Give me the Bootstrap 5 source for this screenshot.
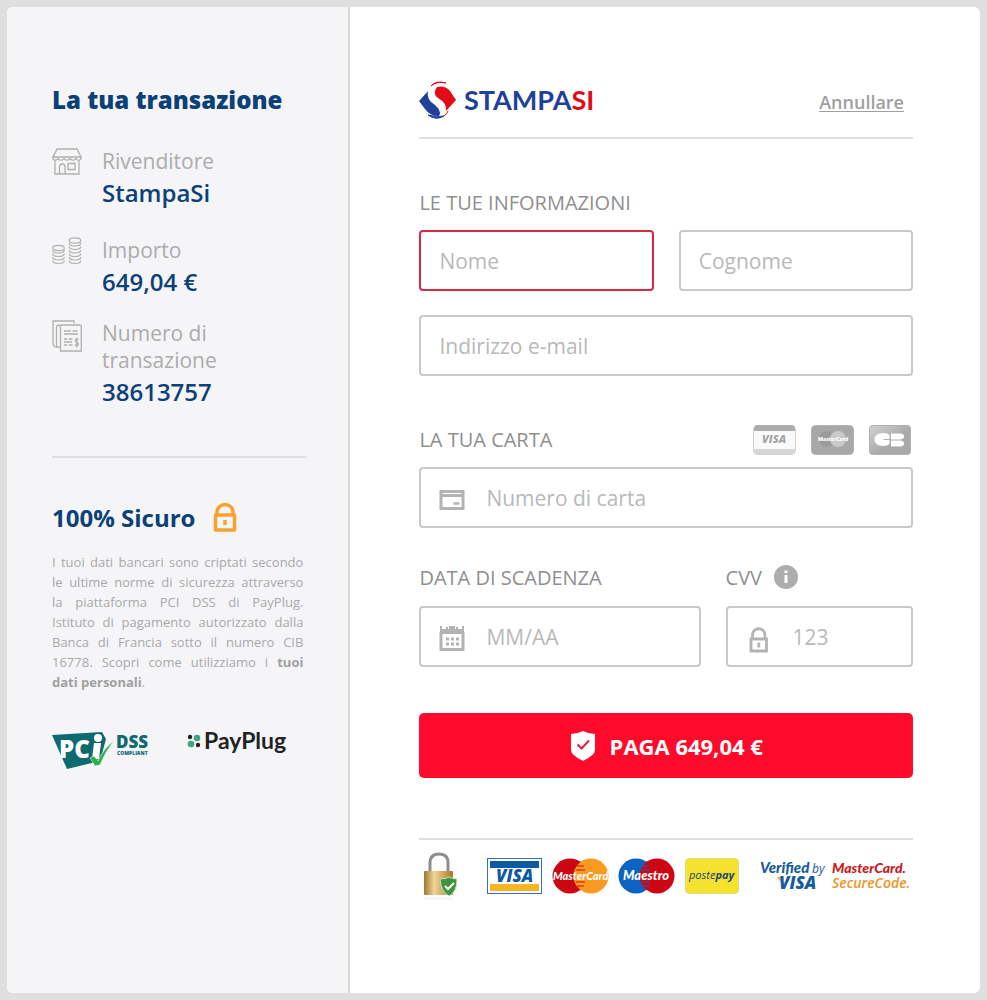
<!DOCTYPE html>
<html lang="it">
<head>
<meta charset="utf-8">
<meta name="viewport" content="width=device-width, initial-scale=1">
<title>Pagamento StampaSi</title>
<link href="https://cdn.jsdelivr.net/npm/bootstrap@5.3.0/dist/css/bootstrap.min.css" rel="stylesheet">
<style>
  body { background: #dfdfdf; font-family: "Open Sans", sans-serif; color: #9b9b9b; padding: 7px; }
  svg { display: block; flex: none; }
  svg text { font-family: "Open Sans", sans-serif; }
  svg text.brand-text { font-family: Lato, sans-serif; font-style: italic; font-weight: 900; }
  svg text.wordmark { font-family: Lato, sans-serif; font-weight: 700; }
  .pay-shell { display: grid; grid-template-columns: 6fr 11fr; min-height: calc(100vh - 14px); background: #fff; border-radius: 6px; overflow: hidden; }
  .summary { background: #f5f5f8; border-right: 2px solid #d8d8d8; padding: 75px 42px 40px 45px; }
  .checkout { padding: 72px 67px 40px 69px; }
  .summary h1 { font-size: 24px; font-weight: 800; line-height: 36px; color: #0c4079; margin-bottom: 30px; }
  .summary h2 { font-size: 24px; font-weight: 700; line-height: 36px; color: #0c4079; margin: 0; }
  .summary dl { margin: 0; }
  .summary dt { font-size: 21px; font-weight: 400; line-height: 27px; color: #acacac; }
  .summary dd { font-size: 24px; font-weight: 600; line-height: 36px; color: #0c4079; margin: 0; }
  .item { gap: 20px; margin-bottom: 20px; }
  .item:first-of-type { margin-bottom: 26px; }
  .item svg { width: 30px; }
  .rule { border: 0; border-top: 2px solid #dfdfe1; opacity: 1; margin: 0; }
  .summary .rule { margin: 46px 0 42px; }
  .privacy { font-size: 13px; line-height: 20px; color: #a9a9a9; text-align: justify; margin: 16px 3px 38px 0; }
  .privacy a { color: #a0a0a0; font-weight: 700; text-decoration: none; }
  .cancel { font-size: 18px; line-height: 24px; font-weight: 600; color: #a0a0a0; margin: 4px 9px 0 0; text-underline-offset: 2px; }
  .caption { font-size: 20px; line-height: 28px; font-weight: 500; color: #8f8f8f; margin: 0; }
  h3.caption { margin: 50px 0 13px; }
  .card-head { margin: 48px 0 11px; }
  .row-head { height: 64px; margin-bottom: 14px; }
  .form-control.field { height: 61px; border: 2px solid #c9c9c9; border-radius: 4px; padding: 0 18px; font-size: 21px; color: #777; }
  .form-control.field::placeholder { color: #b9b9b9; }
  .form-control.field.is-empty { border-color: #d52b42; }
  .with-icon { position: relative; }
  .with-icon svg { position: absolute; left: 20px; top: 18px; }
  .with-icon .form-control.field { padding-left: 65px; }
  .names { display: grid; grid-template-columns: 1fr 1fr; gap: 25px; margin-bottom: 24px; }
  .accepted { gap: 15px; padding-right: 1px; }
  .card-extra { display: grid; grid-template-columns: 3fr 2fr; column-gap: 25px; }
  .pay-btn { height: 65px; gap: 14px; background: #ff0a2b; color: #fff; border-radius: 5px; font-size: 22px; line-height: 32px; font-weight: 700; margin: 46px 0 60px; }
  .pay-btn:hover { background: #e00724; color: #fff; }
  .info-btn { width: 24px; height: 24px; margin: 0 0 3px 12px; }
  .logos { gap: 9px; }
  .logos .first-card { margin-left: 21px; }
  .logos .secure { margin-left: 12px; }
  @media (max-width: 760px) {
    .pay-shell { grid-template-columns: 1fr; }
    .summary { border-right: 0; padding: 32px 24px; }
    .checkout { padding: 32px 24px; }
    .names, .card-extra { grid-template-columns: 1fr; }
  }
</style>
</head>
<body>
<div class="pay-shell">
  <aside class="summary">
    <h1>La tua transazione</h1>
    <div class="item d-flex">
      <svg height="28" viewBox="0 0 30 28" fill="none" stroke="#b0b0b0" stroke-width="1.3" aria-hidden="true">
        <path d="M5 1h20l4 8H1zM1 9v1q0 2.200 2.300 2.200T6 10q.4 2.200 3 2.200T12 10q.4 2.200 3 2.200T18 10q.4 2.200 3 2.200T24 10q.4 2.200 2.700 2.200T29 10V9M3 12.500V26h24V12.500M7.500 26v-7q0-3 2.800-3t2.800 3v7M16 15.500h7v6h-7z"/>
      </svg>
      <dl><dt>Rivenditore</dt><dd>StampaSi</dd></dl>
    </div>
    <div class="item d-flex">
      <svg height="28" viewBox="0 0 30 28" fill="none" stroke="#b0b0b0" stroke-width="1.2" aria-hidden="true">
        <ellipse cx="6.500" cy="11" rx="5.800" ry="2.600"/>
        <path d="M.7 13q0 3 5.800 3t5.800-3M.7 16.500q0 3 5.800 3t5.800-3M.7 20q0 3 5.800 3t5.800-3M.7 23.500q0 3 5.800 3t5.800-3"/>
        <ellipse cx="23" cy="3.500" rx="5.800" ry="2.600"/>
        <path d="M17.200 6q0 3 5.800 3t5.800-3M17.200 9.500q0 3 5.800 3t5.800-3M17.200 13q0 3 5.800 3t5.800-3M17.200 16.500q0 3 5.800 3t5.800-3M17.200 20q0 3 5.800 3t5.800-3M17.200 23.500q0 3 5.800 3t5.800-3"/>
      </svg>
      <dl><dt>Importo</dt><dd>649,04 €</dd></dl>
    </div>
    <div class="item d-flex">
      <svg height="32" viewBox="0 0 30 32" fill="none" stroke="#b0b0b0" stroke-width="1.3" aria-hidden="true">
        <path d="M22 3.500V1H1v22q0 4 3.500 4H8M4.500 27V8q0-3 2-3t2 3v19M8.500 5H28q1.300 0 1.300 1.500V31H8.500V8q0-3-2-3M12 11h7M20.500 11h5M12 14h14M12 19h3M16.500 19h4M12 22h8M12 25h3M16.500 25h4"/>
        <path d="M26.500 19.800q-.8-1-2.200-.7-1.500.6-.9 2 .4.8 1.600 1.200 1.500.7 1.300 2-.5 1.500-2.100 1.200-1-.2-1.500-1M24.800 17.500v10"/>
      </svg>
      <dl><dt>Numero di transazione</dt><dd>38613757</dd></dl>
    </div>
    <hr class="rule">
    <div class="d-flex align-items-center gap-3">
      <h2>100% Sicuro</h2>
      <svg width="28" height="32" viewBox="-1 1 28 32" fill="none" stroke="#f9a030" stroke-width="3.500" aria-hidden="true">
        <path d="M3.500 14h19v15h-19z" stroke-linejoin="round"/><path d="M5 14v-3a8 7.500 0 0 1 16 0v3"/><path d="M13 19v5"/>
      </svg>
    </div>
    <p class="privacy">I tuoi dati bancari sono criptati secondo le ultime norme di sicurezza attraverso la&nbsp;piattaforma PCI DSS di PayPlug. Istituto&nbsp;di&nbsp;pagamento autorizzato dalla Banca&nbsp;di&nbsp;Francia sotto il numero CIB 16778.&nbsp;Scopri come utilizziamo i <a href="#">tuoi dati&nbsp;personali</a>.</p>
    <div class="d-flex align-items-start gap-4 flex-wrap">
      <svg width="101" height="40" viewBox="0 0 101 40" role="img" aria-label="PCI DSS Compliant">
        <path d="M0 5 50 2l4 7-6 22-33 8z" fill="#0f6a70"/>
        <text x="7" y="28" font-size="24" font-weight="800" fill="#fff">PC</text>
        <path d="M42 13h7l-2 16h-7z" fill="#fff"/><circle cx="46" cy="8" r="4" fill="#fff"/>
        <path d="m38 28 4-2 4 5q5-12 16-20-9 11-14 24l-5 1z" fill="#2bb24c" stroke="#f5f5f8" stroke-width=".6"/>
        <text x="64" y="18" font-size="17" font-weight="800" fill="#0f6a70">DSS</text>
        <text x="65" y="25" font-size="5" font-weight="800" fill="#0f6a70">COMPLIANT</text>
      </svg>
      <svg class="ms-2" width="108" height="32" viewBox="-1 0 108 32" role="img" aria-label="PayPlug">
        <circle cx="4" cy="7" r="2.200" fill="#222"/><circle cx="11" cy="8" r="3.300" fill="#3aa77d"/><circle cx="5" cy="14" r="3.300" fill="#3aa77d"/><circle cx="12" cy="15" r="2.200" fill="#222"/>
        <text class="wordmark" x="18" y="19" font-size="23" fill="#222">PayPlug</text>
      </svg>
    </div>
  </aside>

  <main class="checkout">
    <header class="d-flex align-items-center justify-content-between pb-3">
      <svg width="178" height="42" viewBox="0 0 178 42" role="img" aria-label="StampaSi">
        <path d="M0 22 10 11q-1 7 9 13 6 5 1 13-8 1-14-7z" fill="#1f419b"/>
        <path d="M37 21 27 32q1-8-8-13-6-4-1-11 8-2 13 4z" fill="#e30b17"/>
        <path d="M9 11q4-10 17-7-9-1-13 8-1 6 6 10 8 4 7 9-1 4-5 6 1-6-5-11-9-5-7-15z" fill="#fff"/>
        <path d="M12 7q5-6 15-3Q17 2 12 7z" stroke="#e30b17" fill="#e30b17"/>
        <path d="M9 36q8 6 16 1-7 2-16-1z" stroke="#1f419b" fill="#1f419b"/>
        <path d="M29 32q-1 3-4 5" stroke="#e30b17" fill="none"/>
        <text class="wordmark" x="45" y="31" font-size="27" fill="#1f419b">STAMPA<tspan fill="#e30b17">SI</tspan></text>
      </svg>
      <a class="cancel" href="#">Annullare</a>
    </header>
    <hr class="rule">
    <form>
      <h3 class="caption">LE TUE INFORMAZIONI</h3>
      <div class="names">
        <input class="form-control field is-empty" type="text" placeholder="Nome" aria-label="Nome">
        <input class="form-control field" type="text" placeholder="Cognome" aria-label="Cognome">
      </div>
      <input class="form-control field" type="email" placeholder="Indirizzo e-mail" aria-label="Indirizzo e-mail">

      <div class="card-head d-flex justify-content-between align-items-center">
        <label class="caption" for="number">LA TUA CARTA</label>
        <div class="accepted d-flex">
          <svg width="43" height="32" viewBox="0 0 43 32" role="img" aria-label="Visa">
            <rect x=".5" y="1.500" width="42" height="29" rx="4" fill="#fafafa" stroke="#cfcfcf"/><path d="M1 7V5q0-4 4-4h33q4 0 4 4v2z" fill="#acacac"/><path d="M1 25h41v1q0 4-4 4H5q-4 0-4-4z" fill="#d6d6d6"/>
            <text x="9" y="19" font-size="11" font-weight="800" font-style="italic" fill="#a5a5a5">VISA</text>
          </svg>
          <svg width="43" height="32" viewBox="0 0 43 32" role="img" aria-label="MasterCard">
            <rect x=".5" y="1.500" width="42" height="29" rx="4" fill="#a8a8a8" stroke="#b4b4b4"/><circle cx="16" cy="15" r="8" fill="#9b9b9b"/><circle cx="27" cy="15" r="8" fill="#c9c9c9"/>
            <text x="7" y="17" font-size="5" font-weight="800" fill="#fff">MasterCard</text>
          </svg>
          <svg width="43" height="32" viewBox="0 0 43 32" role="img" aria-label="CB">
            <defs><linearGradient id="cbg" x2="1" y2="1"><stop stop-color="#d2d2d2"/><stop offset=".6" stop-color="#a8a8a8"/></linearGradient></defs>
            <rect x=".5" y="1.500" width="41" height="29" rx="3" fill="url(#cbg)" stroke="#b0b0b0"/>
            <path d="M20.500 15V11q-2-2-6-2-9 0-9 6.500T14.500 22q4 0 6-2v-4h-6v-1zM22 9.500h9q4 0 4 3t-4 3h-9zm0 7h9q4 0 4 3t-4 3h-9z" fill="#fff"/>
          </svg>
        </div>
      </div>
      <div class="with-icon">
        <svg width="26" height="28" viewBox="0 0 26 28" fill="none" stroke="#b3b3b3" stroke-width="3" aria-hidden="true"><path d="M2 6.500h22v17H2zM2 10.500h22"/><path d="M14.500 18.500h6" stroke-width="2.500"/></svg>
        <input class="form-control field" id="number" type="text" placeholder="Numero di carta">
      </div>

      <div class="card-extra">
        <div>
          <div class="row-head d-flex align-items-end"><label class="caption" for="expiry">DATA DI SCADENZA</label></div>
          <div class="with-icon">
            <svg width="26" height="28" viewBox="0 0 26 28" fill="none" stroke="#b3b3b3" aria-hidden="true"><path d="M2 8v17.500h22V8" stroke-width="3"/><path d="M1 7.500h24" stroke-width="5"/><path d="M2 2v5M24 2v5M8 3v4M18 3v4" stroke-width="2"/><path d="M10 4h6" stroke-width="4"/><path d="M7 15h3m2 0h3m2 0h3M7 20h3m2 0h3m2 0h3" stroke-width="3"/></svg>
            <input class="form-control field" id="expiry" type="text" placeholder="MM/AA">
          </div>
        </div>
        <div>
          <div class="row-head d-flex align-items-end">
            <label class="caption" for="cvv">CVV</label>
            <button class="info-btn btn p-0 border-0" type="button" aria-label="Informazioni sul CVV"><svg width="24" height="24" viewBox="0 0 24 24" aria-hidden="true"><circle cx="12" cy="12" r="12" fill="#adadad"/><path d="M12 10v8M12 5.500v2.500" fill="none" stroke="#fff" stroke-width="3"/></svg></button>
          </div>
          <div class="with-icon">
            <svg width="26" height="30" viewBox="0 0 26 30" fill="none" stroke="#b3b3b3" stroke-width="2.800" aria-hidden="true"><path d="M5 15h15.500v12H5z"/><path d="M6.500 15v-4a6.200 6.200 0 0 1 12.500 0v4"/><path d="M12.800 18.500v5"/></svg>
            <input class="form-control field" id="cvv" type="text" placeholder="123">
          </div>
        </div>
      </div>
      <button class="pay-btn btn w-100 border-0 d-flex align-items-center justify-content-center" type="submit">
        <svg width="26" height="32" viewBox="0 0 26 32" aria-hidden="true"><path d="M1 4q6 0 12-3 6 3 12 3v16q0 5-12 11Q1 25 1 20z" fill="#fff"/><path d="m7.500 14.500 4 4 7.500-8" fill="none" stroke="#e0223c" stroke-width="2"/></svg>
        <span>PAGA 649,04 €</span>
      </button>
    </form>
    <hr class="rule">
    <footer class="logos d-flex flex-wrap align-items-center pt-2">
      <svg width="38" height="56" viewBox="0 0 38 56" role="img" aria-label="Pagamento sicuro">
        <defs><linearGradient id="brass"><stop stop-color="#9c7730"/><stop offset=".35" stop-color="#efd596"/><stop offset="1" stop-color="#a87824"/></linearGradient></defs>
        <path d="M11 26V15q0-9 9-9t9 9v11" fill="none" stroke="#8d9092" stroke-width="3"/>
        <rect x="5" y="23" width="29" height="24" rx="1" fill="url(#brass)"/><path d="M5 49h29v3H5z" fill="#f5f5f5"/>
        <path d="M21 31q6 0 9-2 4 2 8 2 0 13-8 17-8-4-9-17z" fill="#3f9640" stroke="#c5e0bf"/><path d="m26 38 3 3 6-6" fill="none" stroke="#fff" stroke-width="2"/>
      </svg>
      <svg class="first-card" width="56" height="38" viewBox="0 0 56 38" role="img" aria-label="Visa">
        <rect x=".5" y="1.500" width="54" height="35" fill="#fff" stroke="#3971b0"/><path d="M3 4h49v7H3z" fill="#0d5aa2"/><path d="M3 27h49v7H3z" fill="#f8b526"/>
        <text x="9" y="25" font-size="17" font-weight="800" font-style="italic" fill="#0d5aa2">VISA</text>
      </svg>
      <svg width="57" height="38" viewBox="0 0 57 38" role="img" aria-label="MasterCard">
        <circle cx="18" cy="19" r="17.500" fill="#cc0612"/><circle cx="39" cy="19" r="17.500" fill="#fb9a20"/><path d="M25 9h7m-8 4h9M24 25h9m-8 4h7" stroke="#cc0612"/>
        <text class="brand-text" x="1" y="23" font-size="11" fill="#fff">MasterCard</text>
      </svg>
      <svg width="58" height="38" viewBox="0 0 58 38" role="img" aria-label="Maestro">
        <circle cx="18" cy="19" r="17.500" fill="#0c63c2"/><circle cx="39" cy="19" r="17.500" fill="#cc0612"/><path d="M25 9h6m-7 4h8M24 25h8m-7 4h6" stroke="#0c63c2"/>
        <text class="brand-text" x="5" y="23" font-size="13" fill="#fff">Maestro</text>
      </svg>
      <svg width="54" height="38" viewBox="0 0 54 38" role="img" aria-label="Postepay">
        <rect x=".5" y="1.500" width="53" height="35" rx="4" fill="#f5e22f" stroke="#e0db8a"/>
        <text x="4" y="22" font-size="11" font-style="italic" fill="#23456f">poste<tspan font-weight="700">pay</tspan></text>
      </svg>
      <svg class="secure" width="151" height="38" viewBox="0 0 151 38" role="img" aria-label="Verified by Visa, MasterCard SecureCode">
        <text class="brand-text" x="0" y="16" font-size="15" fill="#1a5a9e">Verified</text>
        <text x="52" y="16" font-size="12" font-style="italic" fill="#1a5a9e">by</text>
        <path d="m17 20 4 0 5 12z" fill="#f8a526"/>
        <text x="19" y="32" font-size="17" font-style="italic" font-weight="800" fill="#1a5a9e">VISA</text>
        <text class="brand-text" x="72" y="16" font-size="14" fill="#cc1a1e">MasterCard.</text>
        <text x="72" y="31" font-size="14" font-style="italic" font-weight="600" fill="#f29322">SecureCode.</text>
      </svg>
    </footer>
  </main>
</div>
<script src="https://cdn.jsdelivr.net/npm/bootstrap@5.3.0/dist/js/bootstrap.bundle.min.js"></script>
</body>
</html>
